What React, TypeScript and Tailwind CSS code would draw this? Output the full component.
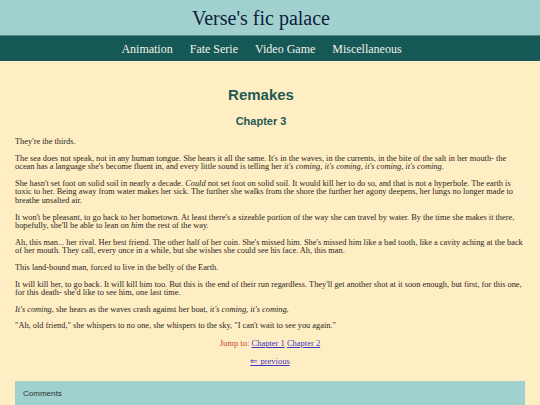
import React from "react";

const serif = { fontFamily: '"Liberation Serif", "Times New Roman", serif' };
const sans = { fontFamily: '"Liberation Sans", Arial, sans-serif' };

export default function App() {
  const navItems = ["Animation", "Fate Serie", "Video Game", "Miscellaneous"];
  return (
    <div className="min-h-[405px] bg-[#ffeec4] text-[#2a2622]" style={serif}>
      <header className="bg-[#a0d1cf] h-[35px] flex items-center justify-center pr-[18px]">
        <h1 className="text-[20px] leading-none text-[#0f1c3c] pt-[1px]">Verse's fic palace</h1>
      </header>
      <nav className="bg-[#155856] h-[26px] border-t border-[#4f8a86] flex items-center justify-center">
        <ul className="flex">
          {navItems.map((n) => (
            <li key={n} className="mr-[17px] text-[12px] text-[#f2f2ea] leading-none">
              {n}
            </li>
          ))}
        </ul>
      </nav>
      <main className="px-[15px]">
        <h2
          className="text-center pr-[18px] pt-[26px] text-[15px] font-bold leading-none text-[#215a52]"
          style={sans}
        >
          Remakes
        </h2>
        <h3
          className="text-center pr-[18px] pt-[14px] text-[11px] font-bold leading-none text-[#215a52]"
          style={sans}
        >
          Chapter 3
        </h3>
        <div className="pt-[11px] text-[8.35px] leading-[8.6px] flex flex-col gap-[8px]">
          <p>They're the thirds.</p>
          <p>
            The sea does not speak, not in any human tongue. She hears it all the same. It's in the waves, in the currents, in the bite of the salt in her mouth- the ocean has a language she's become fluent in, and every little sound is telling her{" "}
            <i>it's coming, it's coming, it's coming, it's coming</i>.
          </p>
          <p>
            She hasn't set foot on solid soil in nearly a decade. <i>Could</i> not set foot on solid soil. It would kill her to do so, and that is not a hyperbole. The earth is toxic to her. Being away from water makes her sick. The further she walks from the shore the further her agony deepens, her lungs no longer made to breathe unsalted air.
          </p>
          <p>
            It won't be pleasant, to go back to her hometown. At least there's a sizeable portion of the way she can travel by water. By the time she makes it there, hopefully, she'll be able to lean on <i>him</i> the rest of the way.
          </p>
          <p>
            Ah, this man... her rival. Her best friend. The other half of her coin. She's missed him. She's missed him like a bad tooth, like a cavity aching at the back of her mouth. They call, every once in a while, but she wishes she could see his face. Ah, this man.
          </p>
          <p>This land-bound man, forced to live in the belly of the Earth.</p>
          <p>
            It will kill her, to go back. It will kill him too. But this is the end of their run regardless. They'll get another shot at it soon enough, but first, for this one, for this death- she'd like to see him, one last time.
          </p>
          <p>
            <i>It's coming</i>, she hears as the waves crash against her boat, <i>it's coming, it's coming</i>,
          </p>
          <p>"Ah, old friend," she whispers to no one, she whispers to the sky, "I can't wait to see you again."</p>
        </div>
        <p className="text-center text-[8.5px] leading-none pt-[8px]">
          <span className="text-[#c8433a]">Jump to: </span>
          <a className="text-[#3b35c9] underline">Chapter 1</a>{" "}
          <a className="text-[#3b35c9] underline">Chapter 2</a>
        </p>
        <p className="text-center text-[8.5px] leading-none pt-[10px]">
          <a className="text-[#3b35c9] underline">⇐ previous</a>
        </p>
        <section className="mt-[15px] bg-[#a0d1cf] h-[30px] px-[8px] pt-[7px]">
          <div className="text-[8px] text-[#2b3330]" style={sans}>
            Comments
          </div>
        </section>
      </main>
    </div>
  );
}
